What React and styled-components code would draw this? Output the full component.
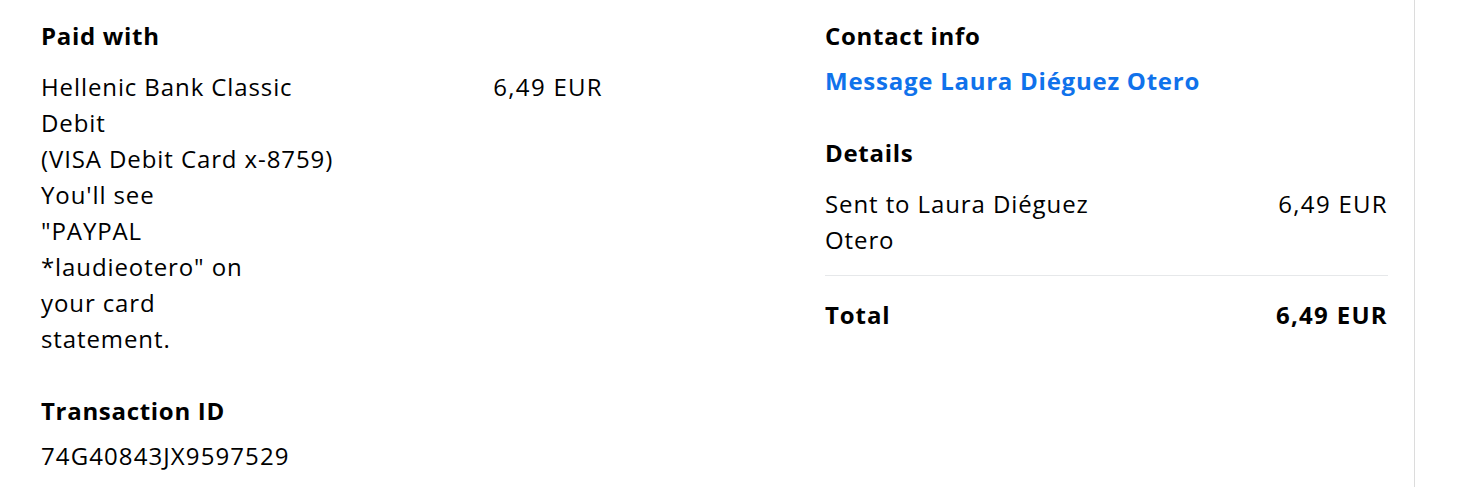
import React from 'react';
import styled, { createGlobalStyle } from 'styled-components';

const Global = createGlobalStyle`
  body {
    margin: 0;
    background: #fff;
    font-family: "Open Sans", Lato, sans-serif;
    color: #000;
  }
`;

const Page = styled.div`
  width: 1415px;
  box-sizing: border-box;
  min-height: 487px;
  border-right: 1px solid #dcdcdc;
  padding: 18px 26px 0 41px;
  display: grid;
  grid-template-columns: 562px 1fr;
  column-gap: 222px;
  align-items: start;
`;

const Column = styled.div`
  display: flex;
  flex-direction: column;
`;

const Heading = styled.h3`
  margin: 0 0 ${p => p.gap || 9}px;
  font-size: 24px;
  line-height: 36px;
  font-weight: 700;
  letter-spacing: 0.7px;
  color: #000;
`;

const Text = styled.div`
  font-size: 24px;
  line-height: 36px;
  letter-spacing: 1.1px;
  color: #000;
`;

const Row = styled.div`
  display: flex;
  justify-content: space-between;
  align-items: flex-start;
  font-size: 24px;
  line-height: 36px;
  font-weight: ${p => (p.bold ? 700 : 400)};
  letter-spacing: ${p => (p.bold ? '0.9px' : '0.9px')};
  color: #000;
`;

const Amount = styled.span`
  letter-spacing: 1.3px;
`;

const Section = styled.section`
  margin-bottom: ${p => p.after || 0}px;
`;

const Link = styled.a`
  font-size: 24px;
  line-height: 36px;
  font-weight: 700;
  letter-spacing: 0.75px;
  color: #1072eb;
  text-decoration: none;
  cursor: pointer;
`;

const Divider = styled.hr`
  border: none;
  border-top: 1px solid #e6e8ea;
  margin: 17px 0 21px;
`;

export default function App() {
  return (
    <>
      <Global />
      <Page>
        <Column>
          <Section after={36}>
            <Heading gap={15}>Paid with</Heading>
            <Row>
              <div>
                Hellenic Bank Classic<br />
                Debit<br />
                (VISA Debit Card x-8759)<br />
                You'll see<br />
                "PAYPAL<br />
                *laudieotero" on<br />
                your card<br />
                statement.
              </div>
              <Amount>6,49 EUR</Amount>
            </Row>
          </Section>
          <Section>
            <Heading>Transaction ID</Heading>
            <Text>74G40843JX9597529</Text>
          </Section>
        </Column>
        <Column>
          <Section after={36}>
            <Heading>Contact info</Heading>
            <Link>Message Laura Diéguez Otero</Link>
          </Section>
          <Section>
            <Heading gap={15}>Details</Heading>
            <Row>
              <div>
                Sent to Laura Diéguez<br />
                Otero
              </div>
              <Amount>6,49 EUR</Amount>
            </Row>
            <Divider />
            <Row bold>
              <span>Total</span>
              <Amount>6,49 EUR</Amount>
            </Row>
          </Section>
        </Column>
      </Page>
    </>
  );
}
